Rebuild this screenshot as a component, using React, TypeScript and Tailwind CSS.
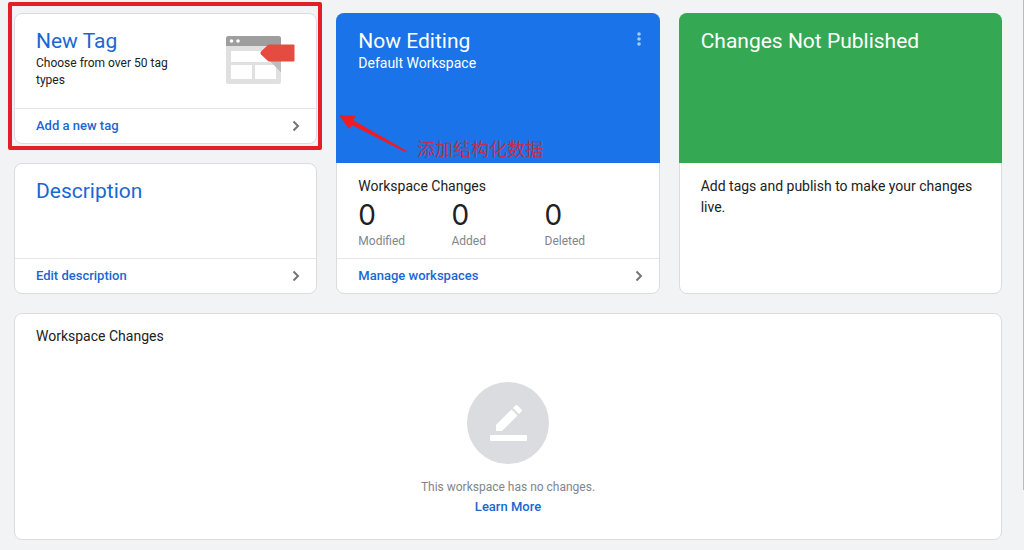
import type { ReactNode } from "react";

const heading = "text-[21px] leading-7";
const card = "rounded-lg border border-[#dadce0] bg-white";

function Chevron() {
  return (
    <svg viewBox="0 0 8 12" className="h-3 w-2" fill="none" stroke="#757575" strokeWidth="2" aria-hidden="true">
      <path d="M1.5 1.5 6 6l-4.500 4.500" />
    </svg>
  );
}

function FooterLink({ children }: { children: ReactNode }) {
  return (
    <a
      href="#"
      className="flex h-[35px] items-center justify-between border-t border-[#e4e6e8] pr-4 pl-[21px] text-[13px] font-medium text-[#1967d2]"
    >
      {children}
      <Chevron />
    </a>
  );
}

function TagIllustration() {
  return (
    <svg viewBox="0 0 70 50" className="h-[50px] w-[70px] shrink-0" aria-hidden="true">
      <rect x="1" y="1" width="55" height="48" rx="2.500" fill="#e0e0e0" />
      <path d="M3.500 1h50A2.500 2.500 0 0 1 56 3.500V11H1V3.500A2.500 2.500 0 0 1 3.500 1Z" fill="#9e9e9e" />
      <circle cx="6.500" cy="6" r="1.800" fill="#fff" />
      <circle cx="13" cy="6" r="1.800" fill="#fff" />
      <path d="M6 16h45v11H6zM6 30h21v14H6zM30 30h21v14H30z" fill="#fff" />
      <path d="M45 26h11v11.500z" fill="#bdbdbd" />
      <path d="M43.500 9.500H68.500a1 1 0 0 1 1 1v15a1 1 0 0 1-1 1H43.500L36 19.500q-1.200-1.500 0-3z" fill="#e54b40" />
    </svg>
  );
}

function Stat({ value, label }: { value: number; label: string }) {
  return (
    <div className="flex flex-col">
      <dd className="order-1 font-['Inter',sans-serif] text-[28px] leading-8 text-[#202124]">{value}</dd>
      <dt className="order-2 text-[12px] leading-5 text-[#80868b]">{label}</dt>
    </div>
  );
}

export default function App() {
  return (
    <div className="min-h-screen bg-[#f1f3f4] font-['Roboto','Noto_Sans_CJK_SC',sans-serif] text-[#202124]">
      <main className="grid grid-cols-[303fr_323fr_323fr] gap-[19px] pt-[13px] pr-[22px] pb-[10px] pl-[14px]">
        <div className="flex flex-col gap-[19px]">
          <section className={`${card} relative flex flex-col`}>
            <div className="flex h-[94px] justify-between px-[21px] pt-[13px]">
              <div className="w-[150px]">
                <h2 className={`${heading} text-[#1967d2]`}>New Tag</h2>
                <p className="text-[12px] leading-[17px]">Choose from over 50 tag types</p>
              </div>
              <div className="pt-2">
                <TagIllustration />
              </div>
            </div>
            <FooterLink>Add a new tag</FooterLink>
            <div className="pointer-events-none absolute -top-3 -right-[6px] -bottom-[7px] -left-[7px] rounded-xs border-4 border-[#e31e26]" />
          </section>
          <section className={`${card} flex flex-col`}>
            <div className="h-[94px] px-[21px] pt-[13px]">
              <h2 className={`${heading} text-[#1967d2]`}>Description</h2>
            </div>
            <FooterLink>Edit description</FooterLink>
          </section>
        </div>

        <section className={`${card} relative flex flex-col`}>
          <div className="-mx-px -mt-px flex h-[150px] items-start justify-between rounded-t-lg bg-[#1a73e8] pt-[14px] pr-[14px] pl-[22px] text-white">
            <div>
              <h2 className={heading}>Now Editing</h2>
              <p className="text-[14px] leading-[17px]">Default Workspace</p>
            </div>
            <button type="button" aria-label="Workspace menu" className="flex h-6 w-[14px] items-center justify-center">
              <svg viewBox="0 0 4 14" className="h-[14px] w-1" fill="#a9caf6" aria-hidden="true">
                <circle cx="2" cy="2" r="1.800" />
                <circle cx="2" cy="7" r="1.800" />
                <circle cx="2" cy="12" r="1.800" />
              </svg>
            </button>
          </div>
          <div className="flex-1 px-[21px] pt-[13px]">
            <h3 className="text-[14px] leading-5">Workspace Changes</h3>
            <dl className="grid grid-cols-3 pt-[3px]">
              <Stat value={0} label="Modified" />
              <Stat value={0} label="Added" />
              <Stat value={0} label="Deleted" />
            </dl>
          </div>
          <FooterLink>Manage workspaces</FooterLink>
          <div className="pointer-events-none absolute top-[100px] left-[2px] flex items-end gap-[10px]">
            <svg viewBox="0 0 68 38" className="h-[38px] w-[68px]" fill="#ee1c25" aria-hidden="true">
              <path d="M0 1 17 2 14 6 68 37 66 38 13 11 10 15Z" />
            </svg>
            <span className="-mb-3 text-[18px] leading-7 text-[#bf3050]">添加结构化数据</span>
          </div>
        </section>

        <section className={card}>
          <div className="-mx-px -mt-px h-[150px] rounded-t-lg bg-[#34a853] px-[22px] pt-[14px] text-white">
            <h2 className={heading}>Changes Not Published</h2>
          </div>
          <p className="px-[21px] pt-[13px] text-[14px] leading-[21px]">Add tags and publish to make your changes live.</p>
        </section>

        <section className={`${card} col-span-3 flex flex-col items-center px-[21px] pt-3 pb-[22px]`}>
          <h3 className="self-start text-[14px] leading-5">Workspace Changes</h3>
          <svg viewBox="0 0 82 82" className="mt-9 h-[82px] w-[82px]" aria-hidden="true">
            <circle cx="41" cy="41" r="41" fill="#dadce0" />
            <g fill="#fff">
              <path d="M29 49v-6l15.500-15.500 6 6L35 49z" />
              <path d="m46 26 2.500-2.500q1-1 2 0l4 4q1 1 0 2L52 32z" />
              <rect x="23" y="53" width="37" height="6" rx="1" />
            </g>
          </svg>
          <p className="mt-[13px] text-[12px] leading-5 text-[#80868b]">This workspace has no changes.</p>
          <a href="#" className="text-[13px] leading-5 font-medium text-[#1967d2]">
            Learn More
          </a>
        </section>
      </main>
      <div className="absolute top-0 right-0 h-[490px] w-px bg-[#b8babc]" />
    </div>
  );
}
